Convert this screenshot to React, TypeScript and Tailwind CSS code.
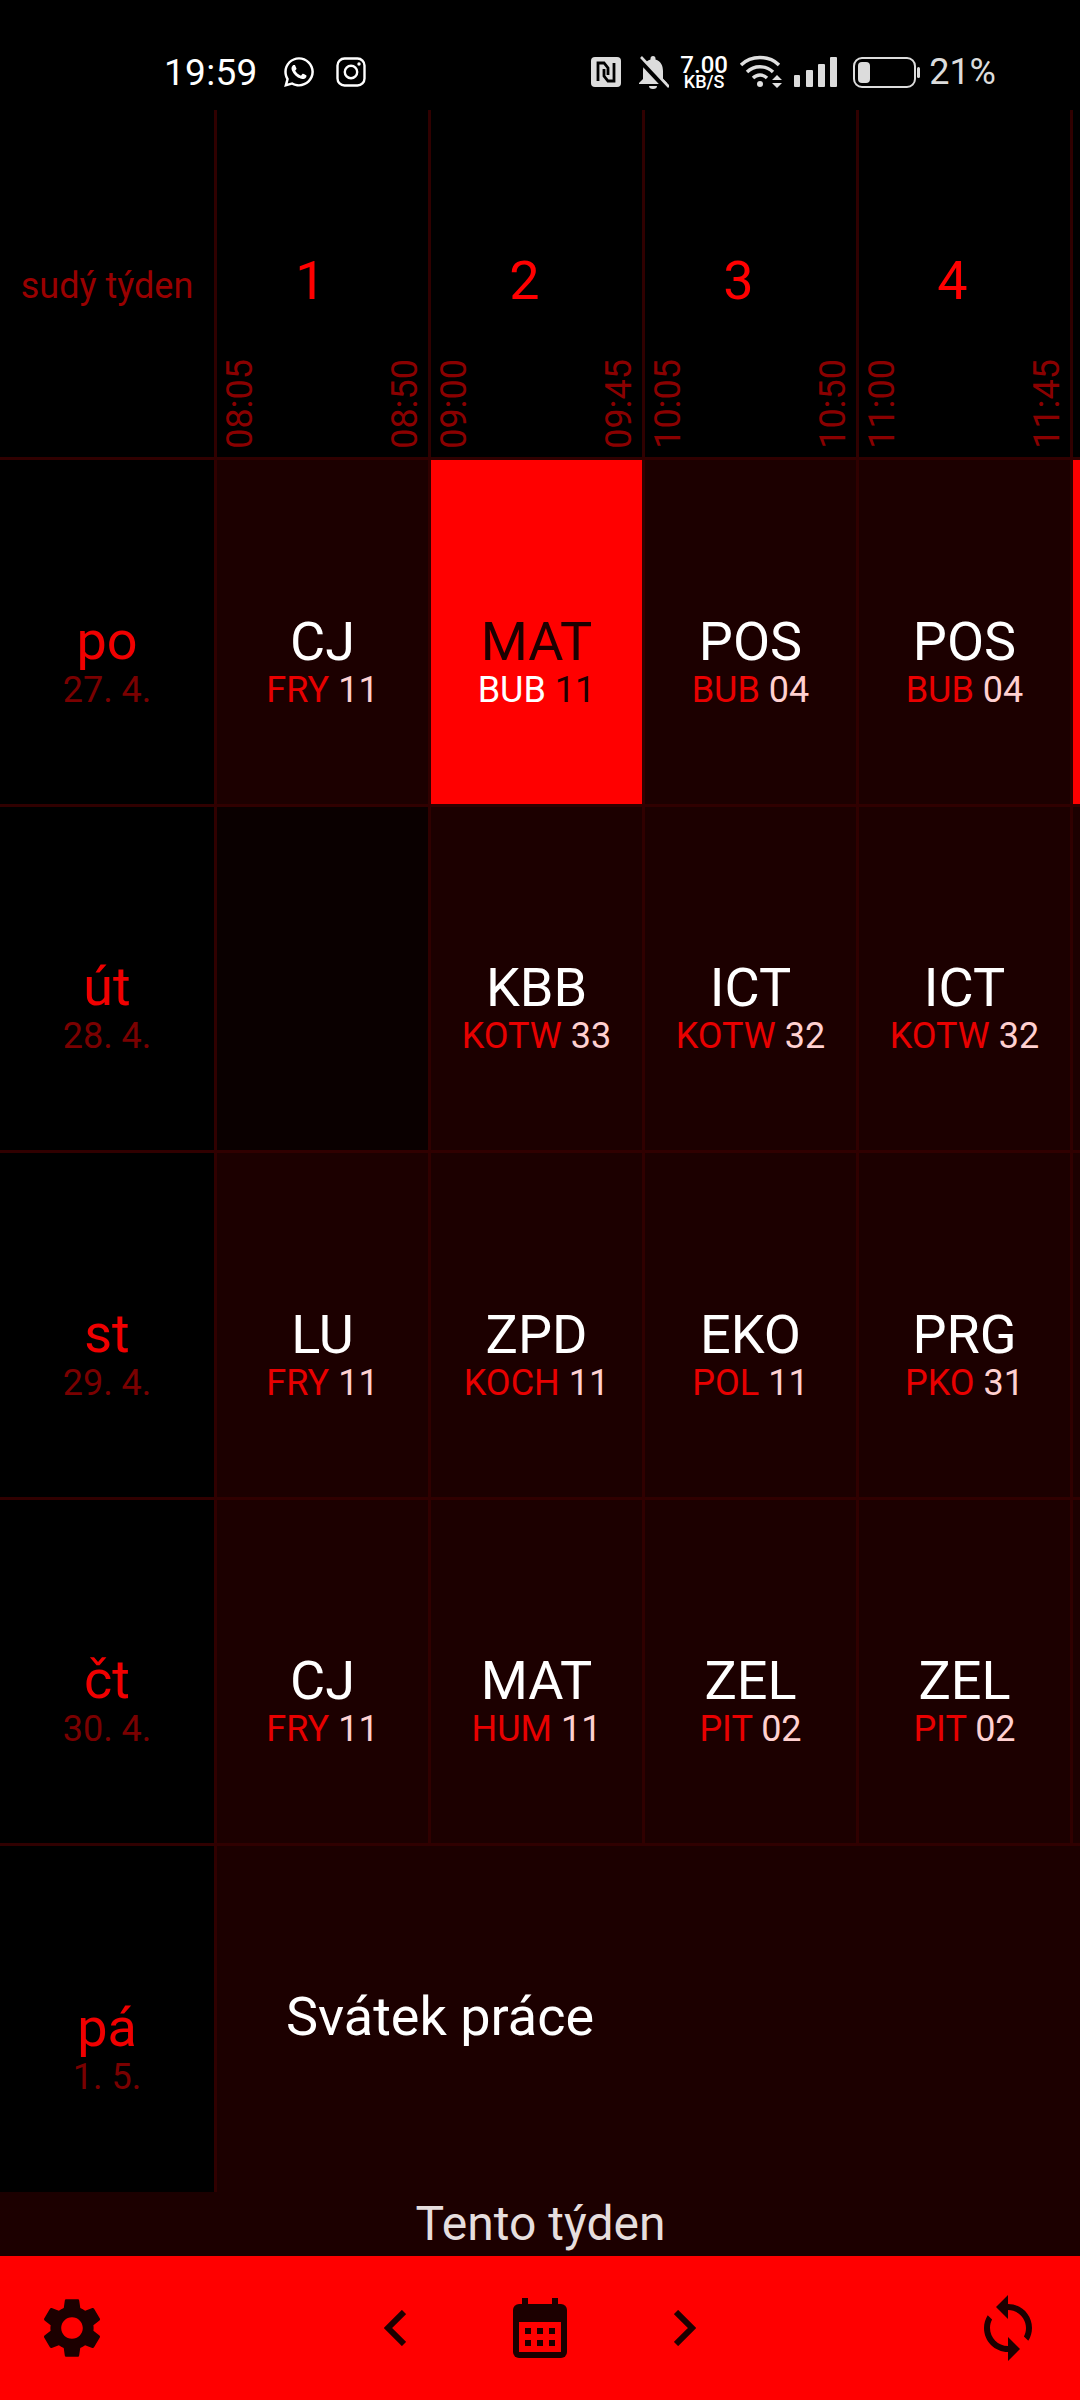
import { FaWhatsapp } from 'react-icons/fa';

const lessons = [
  {
    day: 'po',
    date: '27. 4.',
    cells: [
      { subject: 'CJ', teacher: 'FRY', room: '11' },
      { subject: 'MAT', teacher: 'BUB', room: '11', active: true },
      { subject: 'POS', teacher: 'BUB', room: '04' },
      { subject: 'POS', teacher: 'BUB', room: '04' },
    ],
  },
  {
    day: 'út',
    date: '28. 4.',
    cells: [
      null,
      { subject: 'KBB', teacher: 'KOTW', room: '33' },
      { subject: 'ICT', teacher: 'KOTW', room: '32' },
      { subject: 'ICT', teacher: 'KOTW', room: '32' },
    ],
  },
  {
    day: 'st',
    date: '29. 4.',
    cells: [
      { subject: 'LU', teacher: 'FRY', room: '11' },
      { subject: 'ZPD', teacher: 'KOCH', room: '11' },
      { subject: 'EKO', teacher: 'POL', room: '11' },
      { subject: 'PRG', teacher: 'PKO', room: '31' },
    ],
  },
  {
    day: 'čt',
    date: '30. 4.',
    cells: [
      { subject: 'CJ', teacher: 'FRY', room: '11' },
      { subject: 'MAT', teacher: 'HUM', room: '11' },
      { subject: 'ZEL', teacher: 'PIT', room: '02' },
      { subject: 'ZEL', teacher: 'PIT', room: '02' },
    ],
  },
];

const periods = [
  { num: '1', from: '08:05', to: '08:50' },
  { num: '2', from: '09:00', to: '09:45' },
  { num: '3', from: '10:05', to: '10:50' },
  { num: '4', from: '11:00', to: '11:45' },
];

function StatusBar() {
  return (
    <div className="h-[110px] bg-black flex items-center justify-between pt-[34px] pl-[164px] pr-[84px] text-[#e0e0e0]">
      <div className="flex items-center">
        <span className="text-[37px] leading-none text-white tracking-[0.3px]">19:59</span>
        <FaWhatsapp className="ml-[24px] w-[34px] h-[34px] text-white" />
        <svg viewBox="0 0 30 30" className="ml-[20px] w-[30px] h-[30px]" fill="none" stroke="white" strokeWidth="2.4">
          <rect x="1.5" y="1.5" width="27" height="27" rx="7" />
          <circle cx="15" cy="15" r="6.2" />
          <circle cx="23" cy="7" r="1.7" fill="white" stroke="none" />
        </svg>
      </div>
      <div className="flex items-center">
        <svg viewBox="0 0 30 30" className="w-[30px] h-[30px]">
          <rect width="30" height="30" rx="4" fill="#dcdcdc" />
          <path d="M7 24V6h6l4 5v7" fill="none" stroke="#000" strokeWidth="2.8" />
          <path d="M23 6v18h-6l-4-5v-7" fill="none" stroke="#000" strokeWidth="2.8" />
        </svg>
        <svg viewBox="0 0 31 33" className="ml-[17px] w-[31px] h-[33px]" fill="#dcdcdc">
          <path d="M15 0a2.500 2.500 0 0 1 2.500 2.500v1C23 5 25 10 25 15v8l4 4v1H1v-1l4-4v-8C5 10 7 5 12.500 3.500v-1A2.500 2.500 0 0 1 15 0z" />
          <path d="M11 30h8a4 3 0 0 1-8 0z" />
          <path d="M0 2l28 30" stroke="#000" strokeWidth="5" />
          <path d="M3 1l28 30" stroke="#dcdcdc" strokeWidth="2.600" />
        </svg>
        <div className="ml-[11px] w-[48px] flex flex-col items-center text-white font-medium">
          <span className="text-[24px] leading-[20px]">7.00</span>
          <span className="text-[18px] leading-[14px]">KB/S</span>
        </div>
        <svg viewBox="0 0 44 36" className="ml-[11px] w-[44px] h-[36px]" fill="none" stroke="#e0e0e0" strokeWidth="3.4">
          <path d="M2 11C12 1 30 1 40 11" />
          <path d="M8 18c7-7 19-7 26 0" />
          <path d="M14 24c4-4 10-4 14 0" />
          <circle cx="21" cy="30" r="3" fill="#e0e0e0" stroke="none" />
          <path d="M33 26l5-5 5 5zM33 29l5 5 5-5z" fill="#e0e0e0" stroke="none" />
        </svg>
        <svg viewBox="0 0 43 30" className="ml-[11px] w-[43px] h-[30px]" fill="#dcdcdc">
          <rect x="0" y="18" width="6" height="12" rx="1" />
          <rect x="12" y="13" width="7" height="17" rx="1" />
          <rect x="24" y="7" width="7" height="23" rx="1" />
          <rect x="36" y="0" width="7" height="30" rx="1" />
        </svg>
        <svg viewBox="0 0 67 31" className="ml-[16px] w-[67px] h-[31px]">
          <rect x="1" y="1" width="61" height="29" rx="8" fill="none" stroke="#dcdcdc" strokeWidth="2" />
          <rect x="5" y="5" width="12" height="21" rx="4" fill="#dcdcdc" />
          <rect x="64" y="10" width="3" height="11" rx="1.500" fill="#dcdcdc" />
        </svg>
        <span className="ml-[9px] text-[36px] leading-none text-[#dcdcdc]">21%</span>
      </div>
    </div>
  );
}

function HeaderRow() {
  return (
    <div className="grid grid-cols-[217px_214px_214px_214px_214px_7px] h-[350px] bg-black">
      <div className="border-r-[3px] border-b-[3px] border-[#300000] flex items-center justify-center pt-[4px] text-[36px] text-[#990000]">
        sudý týden
      </div>
      {periods.map((p) => (
        <div key={p.num} className="border-r-[3px] border-b-[3px] border-[#300000] flex flex-col">
          <div className="text-[54px] leading-none text-[#ff0000] text-center pr-[24px] pt-[144px]">{p.num}</div>
          <div className="mt-auto mb-[8px] flex justify-between px-[5px] text-[36px] leading-none text-[#8a0000]">
            <span className="[writing-mode:vertical-rl] rotate-180">{p.from}</span>
            <span className="[writing-mode:vertical-rl] rotate-180">{p.to}</span>
          </div>
        </div>
      ))}
      <div className="border-b-[3px] border-[#300000]" />
    </div>
  );
}

function DayCell({ day, date }: { day: string; date: string }) {
  return (
    <div className="border-r-[3px] border-[#300000] bg-black flex flex-col items-center justify-center pt-[60px]">
      <span className="text-[54px] leading-[56px] text-[#f00000]">{day}</span>
      <span className="text-[36px] leading-[42px] text-[#7a0000]">{date}</span>
    </div>
  );
}

type Lesson = { subject: string; teacher: string; room: string; active?: boolean } | null;

function LessonCell({ lesson }: { lesson: Lesson }) {
  if (!lesson) {
    return <div className="border-r-[3px] border-[#300000] bg-[#0a0000]" />;
  }
  return (
    <div
      className={
        lesson.active
          ? 'border-r-[3px] border-[#300000] bg-[#ff0000] flex flex-col items-center justify-center pt-[60px]'
          : 'border-r-[3px] border-[#300000] bg-[#1c0000] flex flex-col items-center justify-center pt-[60px]'
      }
    >
      <span className={lesson.active ? 'text-[54px] leading-[56px] text-[#1c0000]' : 'text-[54px] leading-[56px] text-white'}>
        {lesson.subject}
      </span>
      <span className="text-[36px] leading-[40px] whitespace-nowrap">
        <span className={lesson.active ? 'text-white' : 'text-[#e80000]'}>{lesson.teacher}</span>{' '}
        <span className={lesson.active ? 'text-[#1c0000]' : 'text-[#ffd0d0]'}>{lesson.room}</span>
      </span>
    </div>
  );
}

function Timetable() {
  return (
    <div>
      {lessons.map((row, i) => (
        <div
          key={row.day}
          className="grid grid-cols-[217px_214px_214px_214px_214px_7px] h-[346.5px] border-b-[3px] border-[#300000]"
        >
          <DayCell day={row.day} date={row.date} />
          {row.cells.map((cell, j) => (
            <LessonCell key={j} lesson={cell} />
          ))}
          <div className={i === 0 ? 'bg-[#ff0000]' : 'bg-[#1c0000]'} />
        </div>
      ))}
      <div className="grid grid-cols-[217px_1fr] h-[346px]">
        <DayCell day="pá" date="1. 5." />
        <div className="bg-[#1c0000] flex items-center pl-[69px] pb-[6px] text-[54px] text-white">Svátek práce</div>
      </div>
    </div>
  );
}

function BottomBar() {
  return (
    <div className="h-[144px] bg-[#ff0000] flex items-center justify-between pl-[44px] pr-[44px]">
      <svg viewBox="2.700 2 18.600 20" className="w-[56px] h-[60px]" fill="#1c0000">
        <path d="M19.140 12.940c.04-.3.06-.61.06-.94 0-.32-.02-.64-.07-.94l2.030-1.580c.18-.14.23-.41.12-.61l-1.920-3.320c-.12-.22-.37-.29-.59-.22l-2.390.96c-.5-.38-1.030-.7-1.620-.94l-.36-2.540c-.04-.24-.24-.41-.48-.41h-3.840c-.24 0-.43.17-.47.41l-.36 2.540c-.59.24-1.130.57-1.620.94l-2.390-.96c-.22-.08-.47 0-.59.22L2.740 8.870c-.12.21-.08.47.12.61l2.030 1.580c-.05.3-.09.63-.09.94s.02.64.07.94l-2.030 1.580c-.18.14-.23.41-.12.61l1.920 3.320c.12.22.37.29.59.22l2.390-.96c.5.38 1.030.7 1.620.94l.36 2.540c.05.24.24.41.48.41h3.840c.24 0 .44-.17.47-.41l.36-2.540c.59-.24 1.130-.56 1.620-.94l2.390.96c.22.08.47 0 .59-.22l1.920-3.320c.12-.22.07-.47-.12-.61l-2.010-1.580zM12 15.600c-1.980 0-3.600-1.620-3.600-3.600s1.620-3.600 3.600-3.600 3.600 1.620 3.600 3.600-1.620 3.600-3.600 3.600z" />
      </svg>
      <div className="flex items-center gap-[104px]">
        <svg viewBox="0 0 22 36" className="w-[22px] h-[36px]" fill="none" stroke="#1c0000" strokeWidth="6">
          <path d="M20 2L4 18l16 16" />
        </svg>
        <svg viewBox="0 0 60 60" className="w-[60px] h-[60px]" fill="#1c0000">
          <rect x="12" y="0" width="6" height="8" />
          <rect x="42" y="0" width="6" height="8" />
          <rect x="3" y="6" width="54" height="54" rx="6" />
          <rect x="9" y="24" width="42" height="30" fill="#ff0000" />
          <rect x="15" y="30" width="6" height="6" />
          <rect x="27" y="30" width="6" height="6" />
          <rect x="39" y="30" width="6" height="6" />
          <rect x="15" y="42" width="6" height="6" />
          <rect x="27" y="42" width="6" height="6" />
          <rect x="39" y="42" width="6" height="6" />
        </svg>
        <svg viewBox="0 0 22 36" className="w-[22px] h-[36px]" fill="none" stroke="#1c0000" strokeWidth="6">
          <path d="M2 2l16 16L2 34" />
        </svg>
      </div>
      <div className="w-[56px] flex justify-center">
        <svg viewBox="4 1 16 22" className="w-[48px] h-[66px]" fill="#1c0000">
          <path d="M12 4V1L8 5l4 4V6c3.310 0 6 2.690 6 6 0 1.010-.25 1.970-.7 2.800l1.460 1.460C19.540 15.030 20 13.570 20 12c0-4.420-3.580-8-8-8zm0 14c-3.310 0-6-2.690-6-6 0-1.010.25-1.970.7-2.800L5.240 7.740C4.460 8.970 4 10.430 4 12c0 4.420 3.580 8 8 8v3l4-4-4-4v3z" />
        </svg>
      </div>
    </div>
  );
}

export default function App() {
  return (
    <div className="w-[1080px] h-[2400px] bg-black overflow-hidden font-['Roboto',sans-serif]">
      <StatusBar />
      <HeaderRow />
      <Timetable />
      <div className="h-[64px] bg-[#1c0000] flex items-center justify-center pl-[1px] text-[48px] leading-none text-[#e6dede]">
        Tento týden
      </div>
      <BottomBar />
    </div>
  );
}
